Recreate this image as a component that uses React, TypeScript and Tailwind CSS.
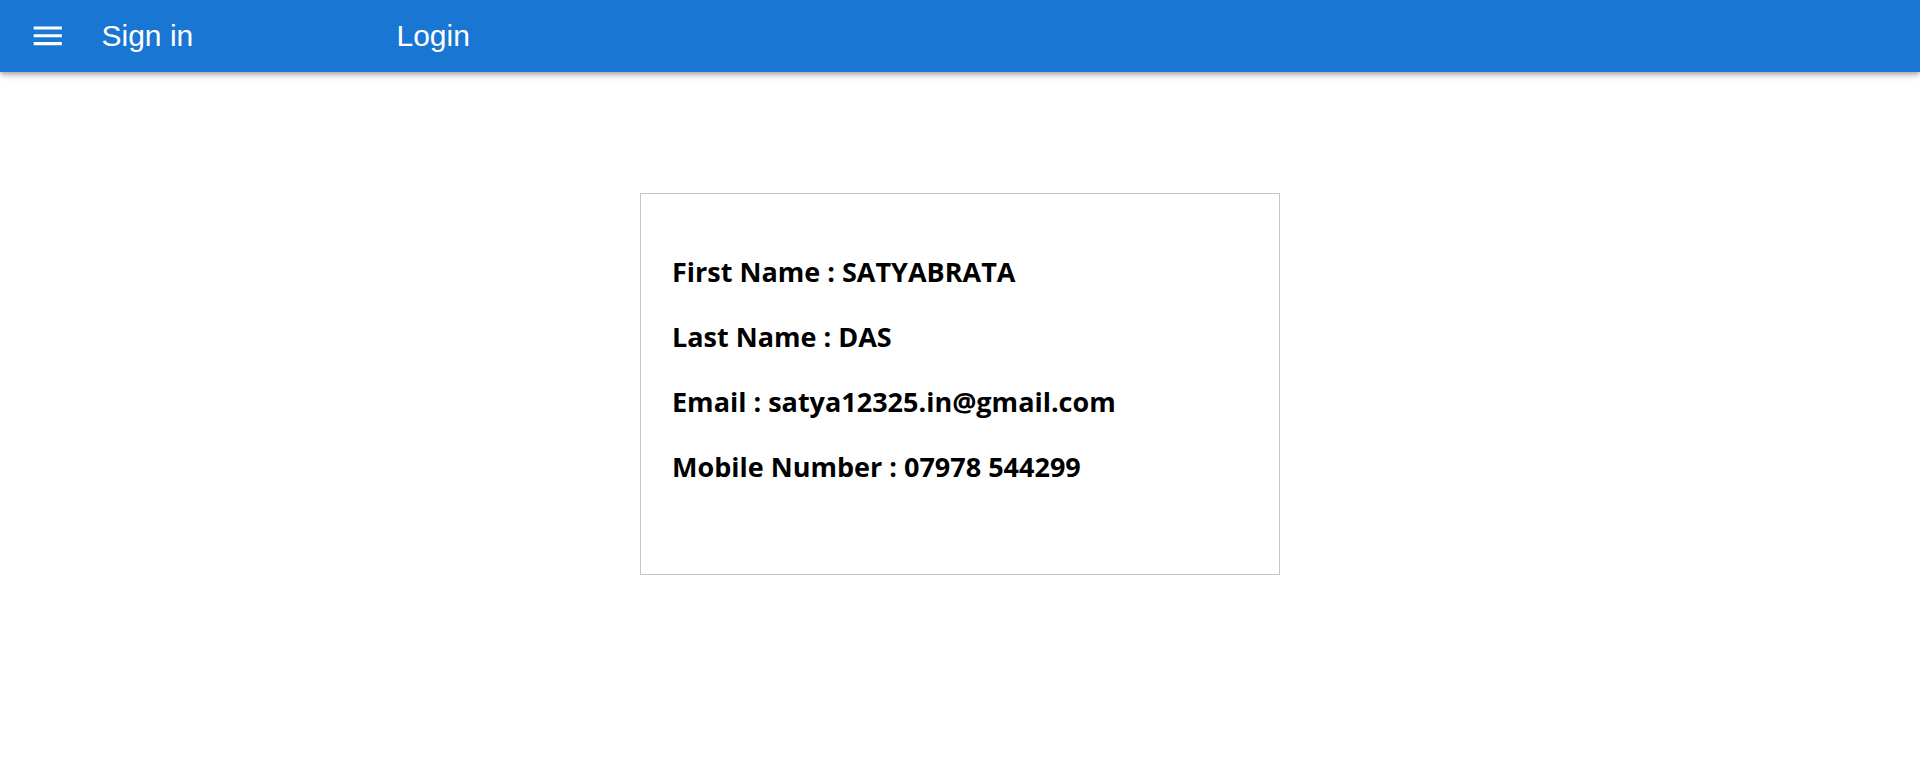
const details = [
  { label: "First Name", value: "SATYABRATA" },
  { label: "Last Name", value: "DAS" },
  { label: "Email", value: "satya12325.in@gmail.com" },
  { label: "Mobile Number", value: "07978 544299" },
]

function MenuIcon() {
  // material "menu" glyph, drawn at ~1.56x
  return (
    <svg viewBox="0 0 24 24" className="w-[37.5px] h-[37.5px] fill-white" aria-hidden>
      <path d="M3 18h18v-2H3v2zm0-5h18v-2H3v2zm0-7v2h18V6H3z" />
    </svg>
  )
}

function TopBar() {
  return (
    <header className="w-full h-[72px] bg-[#1976d2] text-white flex items-center shadow-[0_2px_4px_-1px_rgba(0,0,0,0.2),0_4px_5px_0_rgba(0,0,0,0.14),0_1px_10px_0_rgba(0,0,0,0.12)] font-['Liberation_Sans',Arial,sans-serif]">
      <button className="ml-[29px] flex items-center justify-center" aria-label="menu">
        <MenuIcon />
      </button>
      <span className="ml-[35px] text-[30px] leading-none w-[295px]">Sign in</span>
      <span className="text-[30px] leading-none">Login</span>
    </header>
  )
}

function ProfileCard() {
  return (
    <section className="mx-auto mt-[121px] w-[640px] h-[382px] border border-[#c6c6c6] pt-[45px] pl-[31px] font-['Open_Sans',sans-serif]">
      {details.map((d) => (
        <p key={d.label} className="text-[27px] leading-[65px] font-bold text-black">
          {d.label} : {d.value}
        </p>
      ))}
    </section>
  )
}

export default function App() {
  return (
    <div className="min-h-[768px] bg-white">
      <TopBar />
      <ProfileCard />
    </div>
  )
}
